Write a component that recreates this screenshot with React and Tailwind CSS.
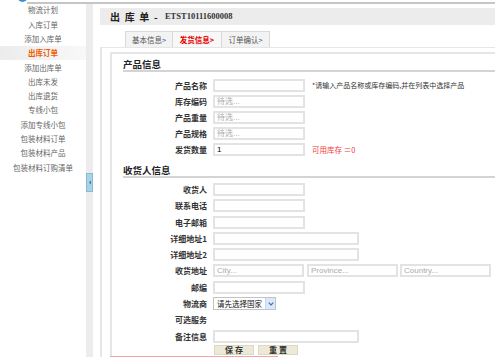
import React from "react";

const sideItems = [
  "物流计划",
  "入库订单",
  "添加入库单",
  "出库订单",
  "添加出库单",
  "出库未发",
  "出库退货",
  "专线小包",
  "添加专线小包",
  "包装材料订单",
  "包装材料产品",
  "包装材料订购清单",
];

function Box({ w, ph, val }) {
  return (
    <div
      className={`${w} h-[13px] border-2 border-[#e3e3e3] bg-white flex items-center pl-[2px] text-[8px] leading-[9px] font-normal`}
    >
      {ph ? (
        <span className="text-[#aaa] font-['Liberation_Sans','Noto_Sans_CJK_SC',sans-serif]">{ph}</span>
      ) : (
        <span className="text-black font-['Liberation_Sans',sans-serif]">{val}</span>
      )}
    </div>
  );
}

function Row({ label, h, children }) {
  return (
    <div className={`flex items-start ${h}`}>
      <div className="w-[84px] text-right text-[8px] font-bold leading-[13px] text-[#333] whitespace-nowrap">
        {label}
      </div>
      <div className="ml-[6px] flex items-start">{children}</div>
    </div>
  );
}

export default function App() {
  return (
    <div className="w-[495px] h-[357px] overflow-hidden bg-white font-['Noto_Sans_CJK_SC','Noto_Sans',sans-serif]">
      {/* top line */}
      <div className="flex h-[4px]">
        <div className="w-[27px] h-[4px]">
          <svg width="27" height="4" viewBox="0 0 27 4">
            <circle cx="22.5" cy="-3" r="5" fill="#3d8fd4" />
          </svg>
        </div>
        <div className="flex-1 mt-[2px] h-[2px] bg-[#c6c6c6]" />
      </div>

      <div className="flex h-[353px]">
        {/* sidebar */}
        <div className="w-[86px] flex flex-col -mt-[1.2px]">
          {sideItems.map((t) => {
            const active = t === "出库订单";
            return (
              <div
                key={t}
                className={
                  active
                    ? "h-[14.3px] flex items-center justify-center text-[7.5px] font-bold text-[#f05a00] bg-gradient-to-r from-[#ececec] to-[#f8f8f8]"
                    : "h-[14.3px] flex items-center justify-center text-[7.5px] text-[#666]"
                }
              >
                {t}
              </div>
            );
          })}
        </div>
        {/* strip */}
        <div className="w-[7px] bg-[#ececec] flex flex-col pt-[169px]">
          <div className="h-[19px] bg-[#a9d2e6] border border-[#86bcd8] flex items-center justify-center">
            <svg width="4" height="5" viewBox="0 0 4 5">
              <path d="M3 0.5 L0.8 2.5 L3 4.5 Z" fill="#3a7fb0" />
            </svg>
          </div>
        </div>
        <div className="w-[7px]" />

        {/* main */}
        <div className="flex-1 flex flex-col">
          <div className="mt-[4px] h-[17px] bg-[#ececec] flex items-center pl-[10px]">
            <span className="text-[10px] font-bold text-[#222] whitespace-pre tracking-[1.2px]">出 库 单 -</span>
            <span className="ml-[6px] text-[8.5px] text-[#333] font-['Liberation_Serif',serif] font-semibold">
              ETST10111600008
            </span>
          </div>

          {/* tabs */}
          <div className="mt-[6px] h-[16px] flex pl-[25px]">
            <div className="w-[48px] h-[16px] bg-[#f3f3f3] border border-[#d9d9d9] border-b-0 flex items-center justify-center text-[7.5px] text-[#555]">
              基本信息&gt;
            </div>
            <div className="w-[49px] h-[16px] bg-[#f8f8f8] border-t border-r border-[#d9d9d9] flex items-center justify-center text-[7.5px] font-bold text-[#e60000]">
              发货信息&gt;
            </div>
            <div className="w-[48px] h-[16px] bg-[#f3f3f3] border-t border-r border-[#d9d9d9] flex items-center justify-center text-[7.5px] text-[#555]">
              订单确认&gt;
            </div>
          </div>

          {/* outer panel */}
          <div className="flex-1 border-l-2 border-t border-[#e6e6e6] pl-[8px] pt-[4px]">
            <div className="h-full border-l-2 border-t-2 border-[#e6e6e6] pl-[11px]">
              <div className="pt-[4px] leading-[12px] text-[9.5px] font-bold text-[#222] border-b-2 border-[#d4d4d4]">
                产品信息
              </div>
              <div className="mt-[7px] flex flex-col">
                <Row label="产品名称" h="h-[16px]">
                  <Box w="w-[92px]" val="" />
                  <span className="ml-[7px] text-[7px] leading-[13px] text-[#333] whitespace-nowrap">
                    *请输入产品名称或库存编码,并在列表中选择产品
                  </span>
                </Row>
                <Row label="库存编码" h="h-[16px]">
                  <Box w="w-[92px]" ph="待选..." />
                </Row>
                <Row label="产品重量" h="h-[16px]">
                  <Box w="w-[92px]" ph="待选..." />
                </Row>
                <Row label="产品规格" h="h-[16px]">
                  <Box w="w-[92px]" ph="待选..." />
                </Row>
                <Row label="发货数量" h="h-[16px]">
                  <Box w="w-[92px]" val="1" />
                  <span className="ml-[7px] text-[7.5px] leading-[13px] text-[#f03c3c] whitespace-pre">
                    可用库存 ＝0
                  </span>
                </Row>
              </div>

              <div className="mt-[5px] leading-[12px] text-[9.5px] font-bold text-[#222] border-b-2 border-[#d4d4d4]">
                收货人信息
              </div>
              <div className="mt-[5px] flex flex-col">
                <Row label="收货人" h="h-[16.3px]">
                  <Box w="w-[92px]" val="" />
                </Row>
                <Row label="联系电话" h="h-[16.3px]">
                  <Box w="w-[92px]" val="" />
                </Row>
                <Row label="电子邮箱" h="h-[16.3px]">
                  <Box w="w-[92px]" val="" />
                </Row>
                <Row label="详细地址1" h="h-[16.3px]">
                  <Box w="w-[146px]" val="" />
                </Row>
                <Row label="详细地址2" h="h-[16.3px]">
                  <Box w="w-[146px]" val="" />
                </Row>
                <Row label="收货地址" h="h-[16.3px]">
                  <Box w="w-[91px]" ph="City..." />
                  <div className="ml-[3px]">
                    <Box w="w-[91px]" ph="Province..." />
                  </div>
                  <div className="ml-[2px]">
                    <Box w="w-[91px]" ph="Country..." />
                  </div>
                </Row>
                <Row label="邮编" h="h-[16.3px]">
                  <Box w="w-[92px]" val="" />
                </Row>
                <Row label="物流商" h="h-[16.3px]">
                  <div className="w-[63px] h-[13px] border border-[#c3c3c3] bg-white flex items-center">
                    <span className="flex-1 pl-[3px] text-[7.5px] leading-[9px] text-[#111] whitespace-nowrap">
                      请先选择国家
                    </span>
                    <div className="w-[10px] h-[11px] bg-[#dbe8f8] border-l border-[#c6d6ec] flex items-center justify-center">
                      <svg width="6" height="4" viewBox="0 0 6 4">
                        <path d="M0.7 0.7 L3 3 L5.3 0.7" stroke="#3a6fc4" strokeWidth="1.2" fill="none" />
                      </svg>
                    </div>
                  </div>
                </Row>
                <Row label="可选服务" h="h-[16.3px]">
                  <div />
                </Row>
                <Row label="备注信息" h="h-[16.3px]">
                  <Box w="w-[146px]" val="" />
                </Row>
              </div>
              <div className="-mt-[1px] flex pl-[91px]">
                <div className="w-[40px] h-[10px] bg-[#ece9d8] border border-[#dcd8c4] flex items-center justify-center text-[8px] leading-[8px] font-bold text-[#333] whitespace-pre">
                  保 存
                </div>
                <div className="ml-[4px] w-[40px] h-[10px] bg-[#ece9d8] border border-[#dcd8c4] flex items-center justify-center text-[8px] leading-[8px] font-bold text-[#333] whitespace-pre">
                  重 置
                </div>
              </div>
              <div className="mt-[1px] -ml-[13px] w-[168px] h-[1px] bg-[#f4a3a3]" />
            </div>
          </div>
        </div>
      </div>
    </div>
  );
}
